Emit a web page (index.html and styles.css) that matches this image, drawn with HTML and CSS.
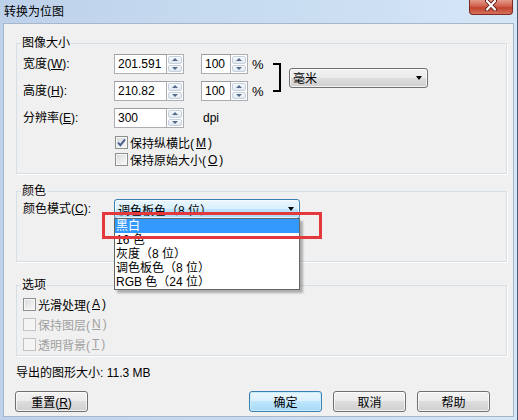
FILE: index.html
```html
<!DOCTYPE html>
<html lang="zh-CN">
<head>
    <meta charset="UTF-8">
    <title>转换为位图</title>
    <link rel="stylesheet" href="styles.css">
</head>
<body>
<div class="window">
    <div class="titlebar">
        <span class="title">转换为位图</span>
        <span class="close-btn">
            <svg width="14" height="11" viewBox="0 0 14 11">
                <path d="M3 1 L11 9.5 M11 1 L3 9.5" stroke="#5b1d17" stroke-width="4" stroke-linecap="round" fill="none"/>
                <path d="M3 1 L11 9.5 M11 1 L3 9.5" stroke="#fff" stroke-width="2.2" stroke-linecap="round" fill="none"/>
            </svg>
        </span>
    </div>

    <div class="client">
        <fieldset class="group group-size">
            <legend>图像大小</legend>
            <div class="size-grid">
                <span class="lbl">宽度(<u>W</u>):</span>
                <div class="spin spin-wide"><span class="field">201.591</span><span class="arrows"><i class="up"></i><i class="down"></i></span></div>
                <div class="spin spin-narrow"><span class="field">100</span><span class="arrows"><i class="up"></i><i class="down"></i></span></div>
                <span class="unit">%</span>
                <span class="bracket"></span>
                <div class="combo combo-unit"><span>毫米</span><i class="caret"></i></div>

                <span class="lbl">高度(<u>H</u>):</span>
                <div class="spin spin-wide"><span class="field">210.82</span><span class="arrows"><i class="up"></i><i class="down"></i></span></div>
                <div class="spin spin-narrow"><span class="field">100</span><span class="arrows"><i class="up"></i><i class="down"></i></span></div>
                <span class="unit">%</span>

                <span class="lbl">分辨率(<u>E</u>):</span>
                <div class="spin spin-wide"><span class="field">300</span><span class="arrows"><i class="up"></i><i class="down"></i></span></div>
                <span class="dpi">dpi</span>
            </div>
            <div class="checks checks-indent">
                <label class="check">
                    <span class="cb"><svg width="9" height="9" viewBox="0 0 9 9"><path d="M1 4.6 L3.4 7.2 L8 1.4" stroke="#4b5f8f" stroke-width="1.9" fill="none"/></svg></span>
                    保持纵横比(<u>M</u>)
                </label>
                <label class="check"><span class="cb"></span>保持原始大小(<u>O</u>)</label>
            </div>
        </fieldset>

        <fieldset class="group group-color">
            <legend>颜色</legend>
            <div class="color-row">
                <span class="lbl">颜色模式(<u>C</u>):</span>
                <div class="combo-wrap">
                    <div class="combo combo-focus"><span>调色板色（8 位）</span><i class="caret"></i></div>
                    <ul class="droplist">
                        <li class="selected">黑白</li>
                        <li>16 色</li>
                        <li>灰度（8 位）</li>
                        <li>调色板色（8 位）</li>
                        <li>RGB 色（24 位）</li>
                    </ul>
                    <span class="callout"></span>
                </div>
            </div>
        </fieldset>

        <fieldset class="group group-options">
            <legend>选项</legend>
            <div class="checks">
                <label class="check"><span class="cb"></span>光滑处理(<u>A</u>)</label>
                <label class="check disabled"><span class="cb"></span>保持图层(<u>N</u>)</label>
                <label class="check disabled"><span class="cb"></span>透明背景(<u>T</u>)</label>
            </div>
        </fieldset>

        <p class="export-size">导出的图形大小: 11.3 MB</p>

        <div class="buttons">
            <button class="btn btn-reset">重置(<u>R</u>)</button>
            <button class="btn btn-default">确定</button>
            <button class="btn">取消</button>
            <button class="btn">帮助</button>
        </div>
    </div>
</div>
</body>
</html>
```

FILE: styles.css
```css
* {
    margin: 0;
    padding: 0;
    box-sizing: border-box;
}

body {
    width: 518px;
    height: 420px;
    overflow: hidden;
    background: #5d6f86;
    font-family: "Liberation Sans", "Noto Sans CJK SC", sans-serif;
    font-size: 12px;
    color: #000;
}

u {
    text-decoration: underline;
    text-underline-offset: 1px;
}

.window {
    width: 518px;
    height: 420px;
    display: flex;
    flex-direction: column;
    padding: 0 3px 3px;
    background: linear-gradient(to right, #bdd2ea, #cadef2 60%, #d5e6f6);
    border-right: 1px solid #4a5a70;
}

.titlebar {
    height: 23px;
    display: flex;
    justify-content: space-between;
    align-items: flex-start;
}

.title {
    padding: 4px 0 0 1px;
    line-height: 16px;
}

.close-btn {
    width: 44px;
    height: 15px;
    margin-right: 1px;
    display: flex;
    justify-content: center;
    align-items: flex-start;
    border: 1px solid #7d2a22;
    border-top: 0;
    border-radius: 0 0 4px 4px;
    background: linear-gradient(#e49a8a, #d0604d 45%, #c2432f 55%, #d4715a);
}

.client {
    flex: 1;
    display: flex;
    flex-direction: column;
    background: #f0f0f0;
    border: 1px solid #a6b7cb;
    padding: 12px 6px 0 12px;
}

/* group boxes */
.group {
    border: 1px solid #d5dfe5;
    box-shadow: 1px 1px 0 #fff;
    padding: 4px 6px 5px;
    min-width: 0;
}

.group legend {
    padding: 0 1px;
    margin-left: -2px;
    line-height: 14px;
}

.group-color {
    margin-top: 10px;
    padding: 1px 6px 42px;
}

.group-options {
    margin-top: 16px;
    padding: 2px 6px 1px;
}

.lbl {
    line-height: 20px;
    white-space: nowrap;
}

/* size grid */
.size-grid {
    display: grid;
    grid-template-columns: 91px 87px 47px 25px 8px 147px;
    grid-template-rows: repeat(3, 20px);
    row-gap: 7px;
    align-items: center;
}

.spin {
    display: flex;
    height: 20px;
}

.spin-wide {
    width: 70px;
}

.spin-narrow {
    width: 47px;
}

.field {
    flex: 1;
    background: #fff;
    border: 1px solid #abadb3;
    border-top-color: #9a9ca3;
    line-height: 18px;
    padding-left: 3px;
}

.arrows {
    width: 17px;
    display: flex;
    flex-direction: column;
    gap: 1px;
    padding: 1px;
    background: #fff;
    border: 1px solid #abadb3;
    border-left: 0;
}

.arrows i {
    flex: 1;
    display: flex;
    align-items: center;
    justify-content: center;
    border: 1px solid #c7d1dc;
    border-radius: 2px;
    background: linear-gradient(#f7f9fc, #e0e8f1);
}

.arrows i::after {
    content: "";
    border-left: 3px solid transparent;
    border-right: 3px solid transparent;
}

.arrows i.up::after {
    border-bottom: 3px solid #55698a;
}

.arrows i.down::after {
    border-top: 3px solid #55698a;
}

.unit {
    padding-left: 4px;
    font-size: 13px;
}

.dpi {
    padding-left: 2px;
}

.bracket {
    grid-column: 5;
    grid-row: 1 / 3;
    align-self: center;
    height: 29px;
    border: 2px solid #000;
    border-left: 0;
}

/* combo boxes */
.combo {
    height: 20px;
    display: flex;
    align-items: center;
    justify-content: space-between;
    padding: 0 5px 0 3px;
    border: 1px solid #707070;
    border-radius: 3px;
    background: linear-gradient(#f2f2f2, #ebebeb 50%, #dddddd 50%, #cfcfcf);
    box-shadow: inset 0 0 0 1px rgba(255, 255, 255, 0.7);
    white-space: nowrap;
}

.combo-unit {
    grid-column: 6;
    grid-row: 1 / 3;
    align-self: center;
    margin-left: 8px;
}

.caret {
    border-left: 3.5px solid transparent;
    border-right: 3.5px solid transparent;
    border-top: 4px solid #000;
}

.color-row {
    display: flex;
    align-items: center;
}

.color-row .lbl {
    width: 91px;
}

.combo-wrap {
    position: relative;
    width: 186px;
}

.combo-focus {
    border-color: #3c7fb1;
    background: linear-gradient(#eaf6fd, #d9f0fc 50%, #bee6fd 50%, #a7d9f5);
}

.droplist {
    position: absolute;
    top: 19px;
    left: 0;
    width: 186px;
    list-style: none;
    background: #fff;
    border: 1px solid #646464;
    box-shadow: 3px 3px 2px rgba(0, 0, 0, 0.28);
}

.droplist li {
    line-height: 14px;
    padding-left: 1px;
    white-space: nowrap;
}

.droplist li.selected {
    background: #3399ff;
    color: #fff;
}

.callout {
    position: absolute;
    left: -12px;
    top: 13px;
    width: 220px;
    height: 27px;
    border: 3px solid #e4393c;
}

/* check boxes */
.checks-indent {
    margin: 6px 0 0 92px;
}

.check {
    display: flex;
    align-items: center;
    gap: 2px;
    height: 17px;
    white-space: nowrap;
}

.group-options .check {
    height: 20px;
}

.cb {
    width: 13px;
    height: 13px;
    display: flex;
    align-items: center;
    justify-content: center;
    border: 1px solid #8e8f8f;
    background: linear-gradient(135deg, #d6d8dc, #fbfbfb);
    box-shadow: inset 0 0 0 1px #f6f6f6;
}

.check.disabled {
    color: #a0a0a0;
}

.check.disabled .cb {
    border-color: #c2c2c2;
    background: #f4f4f4;
}

.export-size {
    margin-top: 10px;
    line-height: 14px;
}

/* buttons */
.buttons {
    display: flex;
    gap: 11px;
    margin: 11px 17px 0 -1px;
}

.btn {
    width: 73px;
    height: 21px;
    font-family: inherit;
    font-size: 12px;
    color: #000;
    border: 1px solid #707070;
    border-radius: 3px;
    background: linear-gradient(#f2f2f2, #ebebeb 50%, #dddddd 50%, #cfcfcf);
    box-shadow: inset 0 0 0 1px rgba(255, 255, 255, 0.7);
}

.btn-reset {
    margin-right: auto;
}

.btn-default {
    border-color: #3c7fb1;
    background: linear-gradient(#eaf6fd, #d9f0fc 50%, #bee6fd 50%, #a7d9f5);
    box-shadow: inset 0 0 0 1px #c6ecfd;
}
```
